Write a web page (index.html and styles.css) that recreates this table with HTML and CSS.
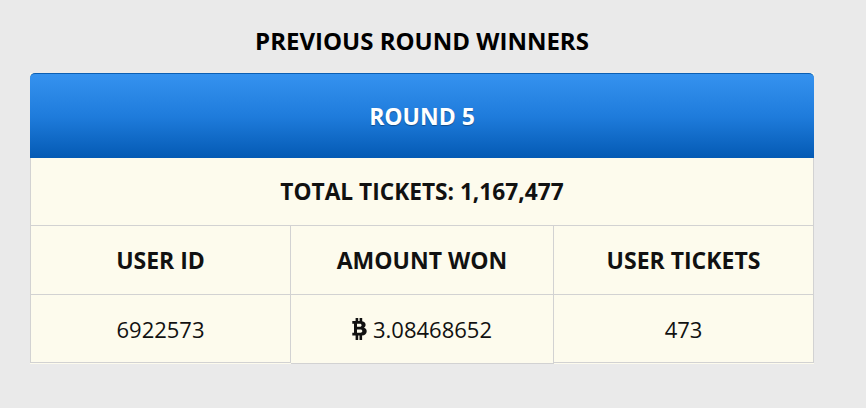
FILE: index.html
```html
<!DOCTYPE html>
<html>
<head>
<meta charset="utf-8">
<link rel="stylesheet" href="styles.css">
</head>
<body>
<div class="wrap">
  <h2 class="title">PREVIOUS ROUND WINNERS</h2>
  <div class="card">
    <div class="card-head">ROUND 5</div>
    <div class="total">TOTAL TICKETS: 1,167,477</div>
    <div class="grid">
      <div class="cell th">USER ID</div>
      <div class="cell th">AMOUNT WON</div>
      <div class="cell th">USER TICKETS</div>
      <div class="cell td">6922573</div>
      <div class="cell td mid"><svg class="btc" viewBox="0 0 15 22" width="15" height="22"><path d="M3.6 0h2.6v3h1.4V0h2.6v3.2C12.4 3.6 13.6 5.1 13.6 6.8c0 1.3-.6 2.3-1.7 2.9 1.8.5 2.8 1.8 2.8 3.5 0 2.5-1.9 4.1-4.6 4.3V22H7.5v-4.5H6.2V22H3.6v-4.5H.3v-2.8h1.7V5.8H.3V3h3.3V0zm1.4 5.8v3h3c.9 0 1.6-.6 1.6-1.5S8.9 5.8 8 5.8H5zm0 5.6v3.3h3.5c1 0 1.8-.7 1.8-1.65s-.8-1.65-1.8-1.65H5z" fill="#111"/></svg>3.08468652</div>
      <div class="cell td">473</div>
    </div>
  </div>
</div>
</body>
</html>
```
FILE: styles.css
```css
html, body {
  margin: 0;
  padding: 0;
}
body {
  background: #eaeaea;
  font-family: "Open Sans", "DejaVu Sans", sans-serif;
  color: #111;
}
.wrap {
  width: 784px;
  margin-left: 30px;
  padding-top: 26px;
}
.title {
  margin: 0 0 17px;
  text-align: center;
  font-size: 24px;
  font-weight: 700;
  line-height: 30px;
  color: #000;
}
.card {
  background: #fdfbed;
}
.card-head {
  height: 84px;
  border-top: 1px solid #0b5fb3;
  border-radius: 5px 5px 0 0;
  background: linear-gradient(to bottom, #3592ef 0%, #1f7cdc 50%, #045ab4 100%);
  color: #fff;
  font-weight: 700;
  font-size: 23px;
  display: flex;
  align-items: center;
  justify-content: center;
  text-shadow: 0 1px 1px rgba(0,0,0,0.35);
}
.total {
  height: 67px;
  border-left: 1px solid #d2d2d2;
  border-right: 1px solid #d2d2d2;
  border-bottom: 1px solid #d2d2d2;
  display: flex;
  align-items: center;
  justify-content: center;
  font-weight: 700;
  font-size: 22.7px;
}
.grid {
  display: grid;
  grid-template-columns: 261px 263px 260px;
  align-items: start;
}
.cell {
  display: flex;
  align-items: center;
  justify-content: center;
  border-right: 1px solid #d2d2d2;
  border-bottom: 1px solid #d2d2d2;
  box-sizing: border-box;
  background: #fdfbed;
}
.cell:nth-child(3n+1) {
  border-left: 1px solid #d2d2d2;
}
.th {
  height: 69px;
  font-weight: 700;
  font-size: 23px;
}
.td {
  height: 68px;
  font-size: 22px;
  font-weight: 400;
}
.td.mid {
  height: 69px;
}
.btc {
  margin-right: 6px;
}
```
